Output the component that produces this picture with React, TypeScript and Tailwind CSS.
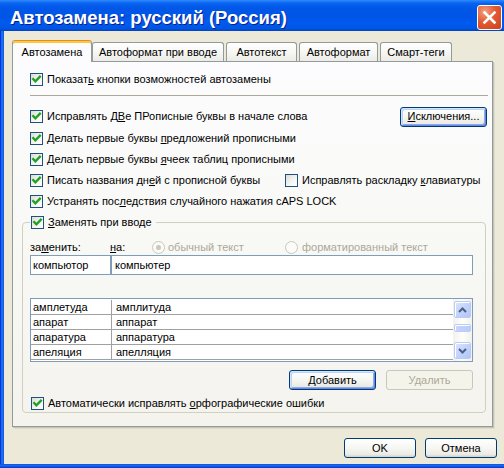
import React from "react";

function Check({ checked = true }: { checked?: boolean }) {
  return (
    <span className="w-[13px] h-[13px] border border-[#1C5180] bg-[linear-gradient(135deg,#DCDCD7_0%,#F6F6F3_60%,#FFFFFF_100%)] flex items-center justify-center shrink-0">
      {checked && (
        <svg width="11" height="11" viewBox="0 0 11 11">
          <path d="M2.2 5 L4.4 7.4 L8.9 2.7" fill="none" stroke="#21A121" strokeWidth="2.3" strokeLinecap="square" />
        </svg>
      )}
    </span>
  );
}

function Radio({ on }: { on?: boolean }) {
  return (
    <span className="w-[13px] h-[13px] rounded-full border border-[#CAC8BB] bg-[#FBFBF8] flex items-center justify-center shrink-0">
      {on && <span className="w-[5px] h-[5px] rounded-full bg-[#CAC8BB]" />}
    </span>
  );
}

function Btn({
  children,
  cls,
  def,
  disabled,
}: {
  children: React.ReactNode;
  cls: string;
  def?: boolean;
  disabled?: boolean;
}) {
  if (disabled) {
    return (
      <div className={`${cls} h-[20px] rounded-[3px] border border-[#C9C7BA] bg-[#F5F4EA] text-[#ACA899] flex items-center justify-center`}>
        {children}
      </div>
    );
  }
  return (
    <div
      className={`${cls} h-[20px] rounded-[3px] border border-[#003C74] bg-[linear-gradient(180deg,#FFFFFF_0%,#F6F6F2_50%,#ECEBE5_85%,#D6D0C5_100%)] text-black flex items-center justify-center ${
        def
          ? "shadow-[inset_1px_1px_0_#CEE7FF,inset_-1px_-1px_0_#6982EE,inset_2px_2px_0_#BCD4F6,inset_-2px_-2px_0_#89ADE4]"
          : ""
      }`}
    >
      {children}
    </div>
  );
}

function ScrollBtn({ up }: { up?: boolean }) {
  return (
    <div className="w-[17px] h-[17px] rounded-[2px] border border-[#B9CBF8] bg-[linear-gradient(135deg,#DCE6FD_0%,#C3D3FB_50%,#B2C6F7_100%)] shadow-[inset_1px_1px_0_#FFFFFF] flex items-center justify-center">
      <svg width="9" height="6" viewBox="0 0 9 6">
        {up ? (
          <path d="M1 5 L4.5 1.5 L8 5" fill="none" stroke="#4D6185" strokeWidth="2" />
        ) : (
          <path d="M1 1 L4.5 4.5 L8 1" fill="none" stroke="#4D6185" strokeWidth="2" />
        )}
      </svg>
    </div>
  );
}

function Tab({ label, cls }: { label: string; cls: string }) {
  return (
    <div
      className={`${cls} h-[19px] border border-b-0 border-[#919B9C] rounded-t-[3px] bg-[linear-gradient(180deg,#FFFFFF_0%,#F7F7F4_50%,#ECEBE6_100%)] flex items-center justify-center pt-[1px]`}
    >
      {label}
    </div>
  );
}

const rows = [
  ["амплетуда", "амплитуда"],
  ["апарат", "аппарат"],
  ["апаратура", "аппаратура"],
  ["апеляция", "апелляция"],
];

export default function App() {
  return (
    <div className="w-[504px] h-[468px] flex flex-col font-['Liberation_Sans',Arial,sans-serif] text-[11px] text-black overflow-hidden select-none">
      {/* Title bar */}
      <div className="h-[31px] shrink-0 flex justify-between items-start bg-[linear-gradient(180deg,#2E8CFF_0%,#0A63F0_10%,#0057E8_25%,#0055E6_55%,#005AF0_75%,#0055E2_92%,#0043C0_100%)]">
        <div className="pl-[10px] pt-[8px] text-[18.5px] leading-[20px] font-bold text-white [text-shadow:1px_1px_0_#0A1F8F]">
          Автозамена: русский (Россия)
        </div>
        <div className="mt-[5px] mr-[2px] w-[25px] h-[25px] rounded-[3px] border border-white bg-[radial-gradient(circle_at_30%_25%,#F0A084_0%,#E35A32_45%,#C8401F_100%)] flex items-center justify-center">
          <svg width="15" height="15" viewBox="0 0 15 15">
            <path d="M2.5 2.5 L12.5 12.5 M12.5 2.5 L2.5 12.5" stroke="white" strokeWidth="2.6" strokeLinecap="square" />
          </svg>
        </div>
      </div>

      {/* Body */}
      <div className="flex-1 flex">
        <div className="w-[4px] bg-[linear-gradient(90deg,#0831D9_0%,#0831D9_25%,#166AEE_25%,#1C6FF0_60%,#0855DD_100%)]" />
        <div className="flex-1 bg-[#ECE9D8] pl-[8px] pt-[9px] flex flex-col">
          {/* Tabs */}
          <div className="h-[21px] flex items-end">
            <div className="w-[80px] h-[22px] -mb-px relative z-10 bg-[#FCFCFE] border-x border-t border-x-[#919B9C] border-t-[#E68B2C] rounded-t-[3px] shadow-[inset_0_2px_0_#FFC83C] flex items-center justify-center pt-[1px]">
              Автозамена
            </div>
            <Tab label="Автоформат при вводе" cls="w-[132px]" />
            <div className="w-[2px]" />
            <Tab label="Автотекст" cls="w-[71px]" />
            <div className="w-[2px]" />
            <Tab label="Автоформат" cls="w-[79px]" />
            <div className="w-[2px]" />
            <Tab label="Смарт-теги" cls="w-[72px]" />
          </div>

          {/* Panel */}
          <div className="w-[481px] h-[366px] border border-[#919B9C] bg-[linear-gradient(180deg,#FCFCFE_0%,#F8F8F5_50%,#F4F3EE_100%)] shadow-[1px_1px_0_#C6C3B5,2px_2px_0_#E0DDCF] flex flex-col">
            <div className="pl-[17px] pr-[5px] pt-[7px]">
              <div className="h-[21px] flex items-center gap-[4px]">
                <Check />
                <span>
                  Показат<u>ь</u> кнопки возможностей автозамены
                </span>
              </div>
              <div className="mt-[5px] h-px bg-[#ACA899] mr-[-1px]" />
              <div className="mt-[10px] h-[21px] flex items-center justify-between">
                <div className="flex items-center gap-[4px]">
                  <Check />
                  <span>
                    Исправлять Д<u>В</u>е ПРописные буквы в начале слова
                  </span>
                </div>
                <Btn cls="w-[87px]" def>
                  <span>
                    <u>И</u>сключения...
                  </span>
                </Btn>
              </div>
              <div className="h-[22px] flex items-center gap-[4px]">
                <Check />
                <span>
                  Делать первые буквы <u>п</u>редложений прописными
                </span>
              </div>
              <div className="h-[21px] flex items-center gap-[4px]">
                <Check />
                <span>
                  Делать первые буквы <u>я</u>чеек таблиц прописными
                </span>
              </div>
              <div className="h-[21px] flex items-center">
                <div className="w-[255px] flex items-center gap-[4px]">
                  <Check />
                  <span>
                    Писать названия дн<u>е</u>й с прописной буквы
                  </span>
                </div>
                <div className="flex items-center gap-[4px]">
                  <Check checked={false} />
                  <span>
                    Исправлять раскладку <u>к</u>лавиатуры
                  </span>
                </div>
              </div>
              <div className="h-[21px] flex items-center gap-[4px]">
                <Check />
                <span>
                  Устранять пос<u>л</u>едствия случайного нажатия cAPS LOCK
                </span>
              </div>
            </div>

            {/* Group box */}
            <fieldset className="ml-[9px] w-[464px] border border-[#D0D0BF] rounded-[4px] pl-[7px] pr-[12px] pb-[1px] m-0 min-w-0">
              <legend className="px-[1px] pr-[4px] h-[21px]">
                <span className="h-[21px] flex items-center gap-[4px]">
                  <Check />
                  <span>
                    <u>З</u>аменять при вводе
                  </span>
                </span>
              </legend>
              <div className="mt-[6px] h-[16px] flex items-center">
                <span className="w-[80px]">
                  за<u>м</u>енить:
                </span>
                <span className="w-[42px]">
                  <u>н</u>а:
                </span>
                <span className="w-[133px] flex items-center gap-[3px] text-[#ACA899]">
                  <Radio on />
                  <span>обычный текст</span>
                </span>
                <span className="flex items-center gap-[4px] text-[#ACA899]">
                  <Radio />
                  <span>форматированный текст</span>
                </span>
              </div>
              <div className="h-[20px] flex">
                <div className="w-[81px] h-[20px] border border-[#7F9DB9] bg-white pl-[2px] flex items-center">
                  компьютор
                </div>
                <div className="w-[362px] h-[20px] border border-[#7F9DB9] bg-white pl-[3px] flex items-center">
                  компьютер
                </div>
              </div>

              <div className="mt-[23px] w-[443px] h-[64px] border border-[#7F9DB9] bg-white flex">
                <div className="flex-1 pt-[1px]">
                  {rows.map(([a, b]) => (
                    <div key={a} className="h-[15px] flex border-b border-[#A0A0A0]">
                      <div className="w-[81px] border-r border-[#A0A0A0] pl-[2px] flex items-center">{a}</div>
                      <div className="flex-1 pl-[4px] flex items-center">{b}</div>
                    </div>
                  ))}
                </div>
                <div className="w-[19px] pl-[1px] pt-[2px] pb-[2px] flex flex-col bg-[linear-gradient(90deg,#F3F1EC_0%,#FEFEFB_50%,#F3F1EC_100%)]">
                  <ScrollBtn up />
                  <div className="mt-[6px] w-[17px] h-[8px] rounded-[2px] border border-[#B9CBF8] bg-[linear-gradient(90deg,#C6D5FB,#B9CBF9)] shadow-[inset_1px_1px_0_#FFFFFF]" />
                  <div className="flex-1" />
                  <ScrollBtn />
                </div>
              </div>

              <div className="mt-[8px] flex justify-end gap-[10px]">
                <Btn cls="w-[87px]" def>
                  <span>
                    <u>Д</u>обавить
                  </span>
                </Btn>
                <Btn cls="w-[87px]" disabled>
                  Удалить
                </Btn>
              </div>

              <div className="mt-[5px] h-[16px] pl-[1px] flex items-center gap-[4px]">
                <Check />
                <span>
                  Автоматически исправлять <u>о</u>рфографические ошибки
                </span>
              </div>
            </fieldset>
          </div>

          {/* Bottom buttons */}
          <div className="mt-[11px] flex justify-end gap-[9px] pr-[7px]">
            <Btn cls="w-[72px]">OK</Btn>
            <Btn cls="w-[72px]">Отмена</Btn>
          </div>
        </div>
      </div>
      <div className="h-[4px] shrink-0 bg-[linear-gradient(180deg,#0855DD_0%,#166AEE_40%,#0831D9_100%)]" />
    </div>
  );
}
